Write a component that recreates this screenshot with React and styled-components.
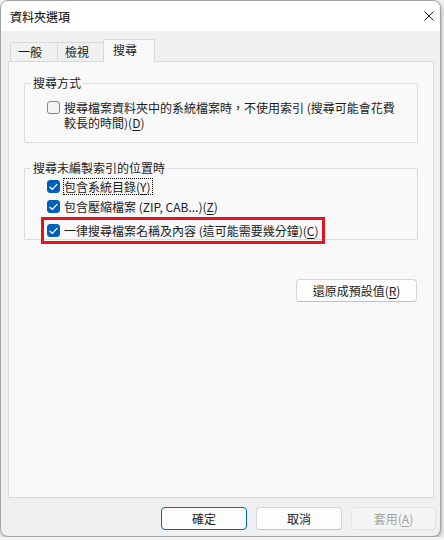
import React from "react";
import styled, { createGlobalStyle, css } from "styled-components";

const Global = createGlobalStyle`
  html, body { margin: 0; padding: 0; }
  body {
    background: #f3f3f3;
    font-family: "Noto Sans CJK TC", "Noto Sans", sans-serif;
    font-size: 12px;
    color: #1b1b1b;
  }
`;

const Window = styled.div`
  box-sizing: border-box;
  width: 441px;
  height: 537px;
  border: 1px solid #a3a3a3;
  border-radius: 8px;
  overflow: hidden;
  display: flex;
  flex-direction: column;
  background: #f0f0f0;
  box-shadow: 1px 2px 4px rgba(0, 0, 0, 0.28);
`;

const TitleBar = styled.div`
  height: 30px;
  flex: none;
  background: #ffffff;
  display: flex;
  align-items: center;
  justify-content: space-between;
  padding: 0 5px 0 9px;
`;

const Title = styled.span`
  font-size: 12px;
  line-height: 15px;
  color: #000;
`;

const CloseBtn = styled.div`
  width: 10px;
  height: 10px;
  display: flex;
  margin-right: 1px;
  svg { display: block; }
`;

const Body = styled.div`
  flex: 1;
  display: flex;
  flex-direction: column;
  padding: 8px 6px 0 7px;
`;

const TabRow = styled.div`
  height: 22px;
  display: flex;
  align-items: flex-end;
  padding-left: 2px;
`;

const Tab = styled.div`
  box-sizing: border-box;
  width: 48px;
  height: 19px;
  margin-left: -1px;
  border: 1px solid #d9d9d9;
  border-bottom: none;
  background: #f0f0f0;
  padding-left: 7px;
  line-height: 18px;
  font-size: 12px;
  &:first-child { margin-left: 0; }
  ${(p) =>
    p.$active &&
    css`
      position: relative;
      z-index: 1;
      width: 52px;
      height: 23px;
      margin: 0 -2px -1px -2px;
      padding-left: 9px;
      line-height: 20px;
      background: #f9f9f9;
      border-radius: 2px 2px 0 0;
    `}
`;

const Panel = styled.div`
  flex: 1;
  box-sizing: border-box;
  background: #f9f9f9;
  border: 1px solid #d9d9d9;
  display: flex;
  flex-direction: column;
  padding: 0 15px;
`;

const Group = styled.fieldset`
  margin: ${(p) => p.$top}px 0 0 0;
  padding: 0;
  border: 1px solid #dcdcdc;
  border-radius: 1px;
  min-width: 0;
`;

const Legend = styled.legend`
  margin-left: 6px;
  padding: 0 2px;
  line-height: 14px;
  font-size: 12px;
`;

const GroupContent = styled.div`
  display: flex;
  flex-direction: column;
  padding: ${(p) => p.$pad};
`;

const Row = styled.label`
  display: flex;
  align-items: flex-start;
  gap: 4px;
  width: fit-content;
  margin-top: ${(p) => p.$mt || 0}px;
  ${(p) =>
    p.$highlight &&
    css`
      outline: 3px solid #e3131f;
      outline-offset: 3px;
    `}
`;

const Box = styled.span`
  flex: none;
  box-sizing: border-box;
  width: 13px;
  height: 13px;
  margin-top: 1px;
  border-radius: 3px;
  display: flex;
  align-items: center;
  justify-content: center;
  ${(p) =>
    p.$checked
      ? css`
          background: #005fb8;
          border: 1px solid #005fb8;
        `
      : css`
          background: #f5f5f5;
          border: 1px solid #858585;
        `}
`;

const LabelText = styled.span`
  line-height: 15px;
  font-size: 12px;
  max-width: ${(p) => (p.$max ? `${p.$max}px` : "none")};
  ${(p) =>
    p.$focus &&
    css`
      outline: 1px dotted #000;
      outline-offset: 0;
      padding: 0 1px 0 0;
    `}
`;

const U = styled.span`
  text-decoration: underline;
  text-underline-offset: 2px;
`;

const RightRow = styled.div`
  display: flex;
  justify-content: flex-end;
  margin-top: ${(p) => p.$mt}px;
  padding-right: ${(p) => p.$pr || 0}px;
`;

const Button = styled.button`
  box-sizing: border-box;
  width: ${(p) => p.$w}px;
  height: 23px;
  border-radius: 4px;
  font-family: inherit;
  font-size: 12px;
  line-height: 15px;
  padding: 0;
  background: #fdfdfd;
  color: #1b1b1b;
  border: 1px solid #d5d5d5;
  border-bottom-color: #c2c2c2;
  ${(p) =>
    p.$primary &&
    css`
      border: 1px solid #0067c0;
      border-bottom-color: #0067c0;
    `}
  ${(p) =>
    p.$disabled &&
    css`
      background: #f5f5f5;
      color: #a2a2a2;
      border: 1px solid #e3e3e3;
    `}
`;

const Footer = styled.div`
  display: flex;
  justify-content: flex-end;
  gap: 9px;
  padding: 9px 0 6px 0;
  margin-right: -2px;
`;

const Check = () => (
  <svg width="9" height="8" viewBox="0 0 9 8">
    <path d="M1 4.2 L3.4 6.4 L8 1.4" fill="none" stroke="#fff" strokeWidth="1.3" strokeLinecap="round" strokeLinejoin="round" />
  </svg>
);

const CheckBox = ({ checked, children, focus, max, highlight, mt }) => (
  <Row $highlight={highlight} $mt={mt}>
    <Box $checked={checked}>{checked && <Check />}</Box>
    <LabelText $focus={focus} $max={max}>{children}</LabelText>
  </Row>
);

export default function App() {
  return (
    <>
      <Global />
      <Window>
        <TitleBar>
          <Title>資料夾選項</Title>
          <CloseBtn>
            <svg width="10" height="10" viewBox="0 0 10 10">
              <path d="M0.5 0.5 L9.5 9.5 M9.5 0.5 L0.5 9.5" stroke="#1b1b1b" strokeWidth="1" />
            </svg>
          </CloseBtn>
        </TitleBar>
        <Body>
          <TabRow>
            <Tab>一般</Tab>
            <Tab>檢視</Tab>
            <Tab $active>搜尋</Tab>
          </TabRow>
          <Panel>
            <Group $top={14}>
              <Legend>搜尋方式</Legend>
              <GroupContent $pad="10px 10px 12px 22px">
                <CheckBox max={340}>
                  搜尋檔案資料夾中的系統檔案時，不使用索引 (搜尋可能會花費較長的時間)(<U>D</U>)
                </CheckBox>
              </GroupContent>
            </Group>
            <Group $top={18}>
              <Legend>搜尋未編製索引的位置時</Legend>
              <GroupContent $pad="4px 10px 1px 22px">
                <CheckBox checked focus>
                  包含系統目錄(<U>Y</U>)
                </CheckBox>
                <CheckBox checked mt={5}>
                  包含壓縮檔案 (ZIP, CAB...)(<U>Z</U>)
                </CheckBox>
                <CheckBox checked highlight mt={9}>
                  一律搜尋檔案名稱及內容 (這可能需要幾分鐘)(<U>C</U>)
                </CheckBox>
              </GroupContent>
            </Group>
            <RightRow $mt={39} $pr={1}>
              <Button $w={121}>
                還原成預設值(<U>R</U>)
              </Button>
            </RightRow>
          </Panel>
          <Footer>
            <Button $w={86} $primary>確定</Button>
            <Button $w={86}>取消</Button>
            <Button $w={85} $disabled>
              套用(<U>A</U>)
            </Button>
          </Footer>
        </Body>
      </Window>
    </>
  );
}
